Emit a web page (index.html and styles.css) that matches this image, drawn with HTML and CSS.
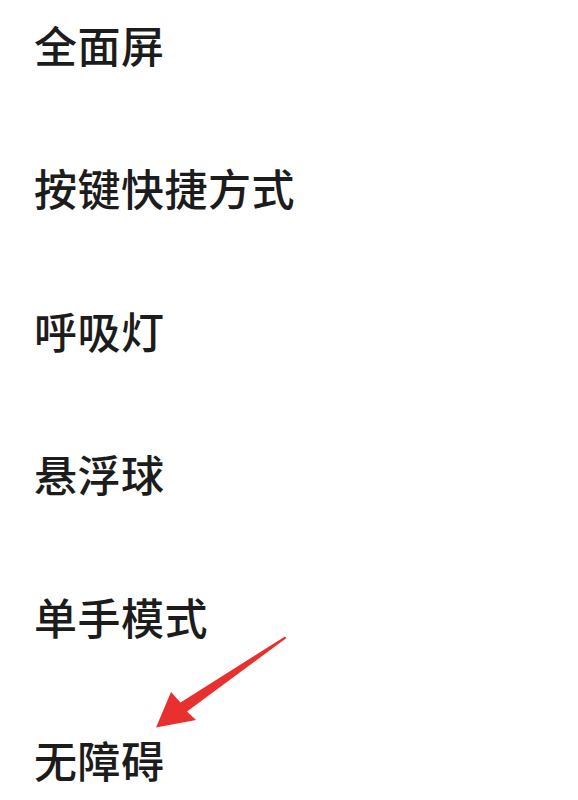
FILE: index.html
```html
<!DOCTYPE html>
<html lang="zh-CN">
<head>
<meta charset="utf-8">
<link rel="stylesheet" href="styles.css">
</head>
<body>
<div class="screen">
  <ul class="menu">
    <li class="item">全面屏</li>
    <li class="item">按键快捷方式</li>
    <li class="item">呼吸灯</li>
    <li class="item">悬浮球</li>
    <li class="item">单手模式</li>
    <li class="item">无障碍</li>
  </ul>
  <svg class="arrow" width="578" height="800" viewBox="0 0 578 800">
    <polygon fill="#e8302e" points="286.5,638 187,711.5 196,720 156,727.5 171,692 180.5,702.5 285,636.5"/>
  </svg>
</div>
</body>
</html>
```
FILE: styles.css
```css
html, body {
  margin: 0;
  padding: 0;
  background: #ffffff;
}
.screen {
  position: relative;
  width: 578px;
  height: 800px;
  overflow: hidden;
  background: #ffffff;
}
.menu {
  list-style: none;
  margin: 0;
  padding: 22px 0 0 34px;
  display: flex;
  flex-direction: column;
  gap: 99px;
}
.item {
  font-family: "Noto Sans CJK SC", "Noto Sans", sans-serif;
  font-size: 43px;
  font-weight: 500;
  line-height: 44px;
  height: 44px;
  color: #1c1c1c;
  letter-spacing: 0.5px;
}
.arrow {
  position: absolute;
  left: 0;
  top: 0;
}
```
